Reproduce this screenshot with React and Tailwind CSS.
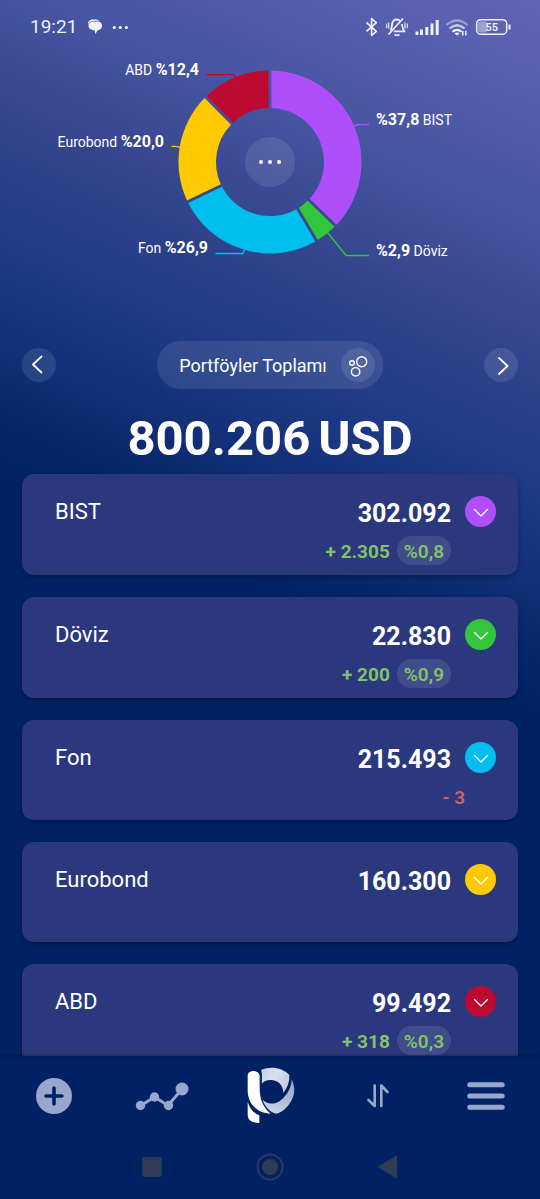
import React from "react";

const SLICES = [
  { name: "BIST", from: 0, to: 134.2, color: "#af4efb" },
  { name: "Döviz", from: 134.2, to: 149.4, color: "#33c53b" },
  { name: "Fon", from: 149.4, to: 244.2, color: "#00bfee" },
  { name: "Eurobond", from: 244.2, to: 315.2, color: "#ffcb00" },
  { name: "ABD", from: 315.2, to: 360, color: "#bd0a30" },
];

const ASSETS = [
  { name: "BIST", value: "302.092", delta: "+ 2.305", percent: "%0,8", tone: "bg-[#af4efb]" },
  { name: "Döviz", value: "22.830", delta: "+ 200", percent: "%0,9", tone: "bg-[#33c53b]" },
  { name: "Fon", value: "215.493", delta: "- 3", tone: "bg-[#00bfee]" },
  { name: "Eurobond", value: "160.300", tone: "bg-[#ffcb00]" },
  { name: "ABD", value: "99.492", delta: "+ 318", percent: "%0,3", tone: "bg-[#bd0a30]" },
];

const CX = 270;
const CY = 162;
const OUTER = 91.5;
const INNER = 54;
const HALF_GAP = 1.4;

function point(radius, degrees) {
  const a = (degrees * Math.PI) / 180;
  return `${(CX + radius * Math.sin(a)).toFixed(2)} ${(CY - radius * Math.cos(a)).toFixed(2)}`;
}

function slicePath(from, to) {
  const go = (Math.asin(HALF_GAP / OUTER) * 180) / Math.PI;
  const gi = (Math.asin(HALF_GAP / INNER) * 180) / Math.PI;
  return [
    `M${point(OUTER, from + go)}`,
    `A${OUTER} ${OUTER} 0 0 1 ${point(OUTER, to - go)}`,
    `L${point(INNER, to - gi)}`,
    `A${INNER} ${INNER} 0 0 0 ${point(INNER, from + gi)}Z`,
  ].join("");
}

function StatusBar() {
  return (
    <header className="flex h-[54px] shrink-0 items-center justify-between pl-[30px] pr-[29px] text-[#eef0fb]">
      <div className="flex items-center">
        <span className="text-[19px] leading-6">19:21</span>
        <svg className="ml-[10px]" width="16" height="16" viewBox="0 0 16 16" fill="currentColor" aria-hidden="true">
          <path d="M1 5.500C.6 2.500 3 .6 6 .6h3c1.500 0 2.600.3 3.500 1L6 2C3.500 2.200 2 3.400 1 5.500z" />
          <path d="M6.500 2.500h4.300c2.600 0 4.300 1.900 4.300 4.200s-1.700 4.200-4.100 4.300L8.300 15 7.600 11.200C4 11.200 1.500 9.300 1.500 6.900c0-2.600 2.200-4.400 5-4.400z" />
        </svg>
        <svg className="ml-[9px]" width="17" height="5" viewBox="0 0 17 5" fill="currentColor" aria-hidden="true">
          <circle cx="2.300" cy="2.500" r="1.600" />
          <circle cx="8.300" cy="2.500" r="1.600" />
          <circle cx="14.400" cy="2.500" r="1.600" />
        </svg>
      </div>
      <svg width="146" height="22" viewBox="365 16 146 22" fill="none" stroke="currentColor" aria-hidden="true">
        <path d="M366.500 22.500l9.800 8.800-4.700 4V18.600l4.700 4-9.800 8.800" strokeWidth="1.700" strokeLinejoin="round" />
        <path d="M390.500 30.500c1.500-2 1.300-5 1.700-7 .5-2.300 2.300-4 4.600-4 1.300 0 2.500.5 3.300 1.300M402 24c.3 2.500.7 5 2.200 7.300h-10.400" strokeWidth="1.800" />
        <path d="M388.500 34.500l14.500-16" strokeWidth="1.700" />
        <path d="M394.500 34.500q2.500 1.600 5 0" strokeWidth="1.500" />
        <path d="M386.800 23.500v4.800M388.800 22.500v6M405 22.500v6M407.300 23.500v4.800" strokeWidth="1.100" />
        <path d="M417 31.500v3.500M421.500 29.500v5.500M426.800 27v8M432 23.500v11.500M437.200 20v15" strokeWidth="3" />
        <path d="M446.500 25q10.500-9 21 0" strokeWidth="2.200" opacity=".45" />
        <path d="M449.500 28.500q7.500-6.500 15 0" strokeWidth="2.200" opacity=".75" />
        <path d="M452.500 31.800q4.500-4 9 0" strokeWidth="2.200" />
        <path d="M454.500 33.500q2.500-2 5 0l-2.500 2z" fill="currentColor" stroke="none" />
        <path d="M462.800 31v4.500M465.800 31v4.500" strokeWidth="1.500" />
        <rect x="476.700" y="19.700" width="30" height="14.500" rx="4" strokeWidth="1.500" />
        <path d="M480 21.500h7v11h-7q-1.800 0-1.800-2v-7q0-2 1.800-2z" fill="currentColor" stroke="none" opacity=".45" />
        <path d="M509.500 24.500v5" strokeWidth="2" />
        <text x="491.700" y="31" textAnchor="middle" fontSize="11" fontWeight="600" fill="currentColor" stroke="none">55</text>
      </svg>
    </header>
  );
}

function AllocationChart() {
  return (
    <section aria-label="Dağılım" className="mx-auto grid w-full max-w-[720px] shrink-0 place-items-center">
      <svg className="w-full [grid-area:1/1]" viewBox="0 54 540 216" fill="none">
        {SLICES.map((s) => (
          <path key={s.name} d={slicePath(s.from, s.to)} fill={s.color} />
        ))}
        <g strokeWidth="1.400">
          <path d="M206.500 74.600h27.500l2.500 4.500" stroke="#bd0a30" />
          <path d="M171.500 146.400h4l5 1" stroke="#ffcb00" />
          <path d="M215.500 253.500h27.500l1.700-4" stroke="#00bfee" />
          <path d="M369 124.500h-11l-5 2" stroke="#af4efb" />
          <path d="M369 255.500h-23l-18.500-23" stroke="#33c53b" />
        </g>
        <g fill="#fff" fontSize="14">
          <text x="199" y="75" textAnchor="end">ABD <tspan fontSize="16" fontWeight="700">%12,4</tspan></text>
          <text x="164" y="147" textAnchor="end">Eurobond <tspan fontSize="16" fontWeight="700">%20,0</tspan></text>
          <text x="208" y="253" textAnchor="end">Fon <tspan fontSize="16" fontWeight="700">%26,9</tspan></text>
          <text x="376" y="125"><tspan fontSize="16" fontWeight="700">%37,8</tspan> BIST</text>
          <text x="376" y="256"><tspan fontSize="16" fontWeight="700">%2,9</tspan> Döviz</text>
        </g>
      </svg>
      <button type="button" aria-label="Seçenekler" className="flex size-[50px] items-center justify-center gap-[5px] rounded-full bg-white/10 [grid-area:1/1]">
        <span className="size-1 rounded-full bg-white" />
        <span className="size-1 rounded-full bg-white" />
        <span className="size-1 rounded-full bg-white" />
      </button>
    </section>
  );
}

function PortfolioSwitcher() {
  return (
    <div className="flex items-center justify-between px-[22px]">
      <button type="button" aria-label="Önceki" className="grid size-[34px] place-items-center rounded-full bg-white/10">
        <svg width="20" height="20" viewBox="0 0 20 20" fill="none" stroke="white" strokeWidth="1.800" strokeLinecap="round" strokeLinejoin="round" aria-hidden="true">
          <path d="M12.500 1.500L4 9.500l8.500 8" />
        </svg>
      </button>
      <button type="button" className="flex h-12 items-center gap-[14px] rounded-full bg-white/10 pl-[22px] pr-2 text-lg text-white">
        <span className="pt-px">Portföyler Toplamı</span>
        <span className="grid size-[34px] place-items-center rounded-full bg-white/10">
          <svg width="24" height="24" viewBox="-1 0 24 24" fill="none" stroke="white" strokeWidth="1.400" aria-hidden="true">
            <circle cx="5" cy="10" r="2.300" />
            <circle cx="14.700" cy="8.700" r="5" />
            <circle cx="8.600" cy="18.800" r="4.200" />
          </svg>
        </span>
      </button>
      <button type="button" aria-label="Sonraki" className="grid size-[34px] place-items-center rounded-full bg-white/10">
        <svg width="20" height="20" viewBox="0 0 20 20" fill="none" stroke="white" strokeWidth="1.800" strokeLinecap="round" strokeLinejoin="round" aria-hidden="true">
          <path d="M8 3l8.500 8L8 19" />
        </svg>
      </button>
    </div>
  );
}

function AssetCard({ name, value, delta, percent, tone }) {
  return (
    <li className="rounded-xl bg-[#2b387e] pt-[22px] pb-[10px] pl-[33px] pr-[22px] shadow-[0_2px_5px_rgba(0,0,0,0.3)]">
      <div className="flex h-[31px] items-center text-white">
        <h2 className="flex-1 text-[22px] leading-7">{name}</h2>
        <span className="pt-[5px] text-[25px] leading-7 font-bold">{value}</span>
        <button type="button" aria-label={`${name} detayı`} className={`ml-[14px] grid size-[31px] place-items-center rounded-full ${tone}`}>
          <svg width="16" height="16" viewBox="0 0 16 16" fill="none" stroke="white" strokeWidth="1.300" strokeLinecap="round" strokeLinejoin="round" aria-hidden="true">
            <path d="M1.500 5.500L8 12l6.500-6.500" />
          </svg>
        </button>
      </div>
      {percent ? (
        <div className="mt-[9px] mr-[45px] flex h-[29px] items-center justify-end gap-[7px] text-[19px] font-bold text-[#82c36a]">
          <span className="pt-0.5 leading-[29px]">{delta}</span>
          <span className="h-[29px] rounded-full bg-white/10 px-[7px] pt-px font-semibold leading-[29px]">{percent}</span>
        </div>
      ) : (
        <div className="mt-[9px] mr-[31px] flex h-7 items-center justify-end pt-[5px] text-[19px] font-semibold text-[#d3616b]">{delta}</div>
      )}
    </li>
  );
}

function Logo() {
  return (
    <svg width="70" height="68" viewBox="0 21 210 204" aria-hidden="true">
      <defs>
        <linearGradient id="ring-top" x1="0" y1="0" x2="1" y2="0.600">
          <stop offset="0" stopColor="#c3cce0" />
          <stop offset="0.500" stopColor="#d9e0ee" />
          <stop offset="1" stopColor="#c3cbe2" />
        </linearGradient>
        <linearGradient id="ring-side" x1="0.900" y1="0" x2="0.300" y2="1">
          <stop offset="0" stopColor="#98a4c6" />
          <stop offset="1" stopColor="#cbd3e6" />
        </linearGradient>
      </defs>
      <path d="M38 62C38 43 72 43 74 62V98C74 136 86 158 107 176C66 174 38 146 38 106Z" fill="#fff" />
      <path d="M38 141C44 160 54 173 73 181V204C49 203 38 196 38 177Z" fill="#fff" />
      <path d="M78 45C106 32 143 38 163 60C164 80 158 98 145 114C145 88 126 72 102 75C92 77 86 80 81 86C80 68 83 59 78 45Z" fill="url(#ring-top)" />
      <path d="M170 74C181 94 180 117 169 137C159 155 142 172 124 176C105 172 88 154 83 134C98 148 116 149 131 140C151 127 168 105 170 74Z" fill="url(#ring-side)" />
    </svg>
  );
}

function BottomBar() {
  return (
    <footer className="relative shrink-0 border-t border-[#041b57] bg-[#002265] text-[#9aa7cc] shadow-[0_-1px_2px_rgba(0,0,0,0.25)]">
      <nav className="grid h-[78px] grid-cols-5 place-items-center">
        <button type="button" aria-label="Ekle">
          <svg width="36" height="36" viewBox="0 0 36 36" aria-hidden="true">
            <circle cx="18" cy="18" r="18" fill="currentColor" />
            <path d="M18 10v16M10 18h16" stroke="#002265" strokeWidth="3.600" strokeLinecap="round" />
          </svg>
        </button>
        <button type="button" aria-label="Grafik">
          <svg width="54" height="30" viewBox="0 0 54 30" fill="currentColor" aria-hidden="true">
            <path d="M6 24.500L19.500 16 33 24.500 47 8" fill="none" stroke="currentColor" strokeWidth="3" />
            <circle cx="5.500" cy="24.500" r="4.700" />
            <circle cx="19.500" cy="16" r="4.700" />
            <circle cx="33.500" cy="24.500" r="4.700" />
            <circle cx="47" cy="8" r="6.500" />
          </svg>
        </button>
        <button type="button" aria-label="Portföy">
          <Logo />
        </button>
        <button type="button" aria-label="İşlemler">
          <svg width="24" height="24" viewBox="0 0 24 24" fill="none" stroke="currentColor" strokeWidth="2.600" strokeLinecap="round" strokeLinejoin="round" aria-hidden="true">
            <path d="M8.700 1.500v20.500L2.500 16M15.300 22V1.500l6.200 6.500" />
          </svg>
        </button>
        <button type="button" aria-label="Menü">
          <svg width="38" height="28" viewBox="0 0 38 28" stroke="currentColor" strokeWidth="5" strokeLinecap="round" aria-hidden="true">
            <path d="M2.800 2.800h32.400M2.800 14h32.400M2.800 25.200h32.400" />
          </svg>
        </button>
      </nav>
      <div className="flex h-16 items-center justify-center gap-[90px] text-[#303b55]">
        <button type="button" aria-label="Son uygulamalar" className="grid size-7 place-items-center">
          <svg width="20" height="20" viewBox="0 0 20 20" fill="currentColor" aria-hidden="true">
            <rect width="20" height="20" rx="3" />
          </svg>
        </button>
        <button type="button" aria-label="Ana ekran" className="grid size-7 place-items-center">
          <svg width="28" height="28" viewBox="0 0 28 28" fill="currentColor" aria-hidden="true">
            <circle cx="14" cy="14" r="12.500" fill="none" stroke="currentColor" strokeWidth="1.800" />
            <circle cx="14" cy="14" r="8" />
          </svg>
        </button>
        <button type="button" aria-label="Geri" className="grid size-7 place-items-center">
          <svg width="20" height="24" viewBox="0 0 20 24" fill="currentColor" aria-hidden="true">
            <path d="M18 .8Q19 .4 19 1.500V22.500Q19 23.600 18 23L1 13Q0 12 1 11z" />
          </svg>
        </button>
      </div>
    </footer>
  );
}

export default function App() {
  return (
    <div className="flex h-screen flex-col overflow-hidden bg-[linear-gradient(204deg,#6165b7_0px,#44539f_220px,#36468f_310px,#213b86_440px,#14327a_520px,#06276b_600px,#002265_650px)] font-[Roboto,'Noto_Sans',sans-serif]">
      <StatusBar />
      <main className="flex min-h-0 flex-1 flex-col overflow-y-auto [scrollbar-width:none]">
        <AllocationChart />
        <div className="mt-[71px]">
          <PortfolioSwitcher />
          <h1 className="mt-5 flex justify-center gap-2 text-[49px] leading-[60px] font-bold text-white">
            <span>800.206</span>
            <span>USD</span>
          </h1>
        </div>
        <ul className="mt-[5px] flex flex-col gap-[22px] px-[22px] pb-6">
          {ASSETS.map((asset) => (
            <AssetCard key={asset.name} {...asset} />
          ))}
        </ul>
      </main>
      <BottomBar />
    </div>
  );
}
